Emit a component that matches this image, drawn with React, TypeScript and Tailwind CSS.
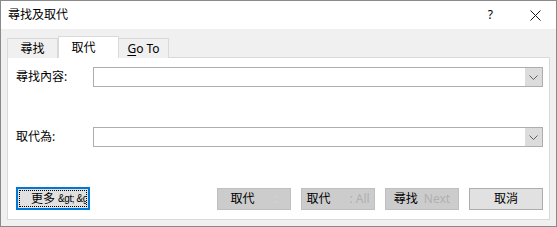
import React from 'react'

const font = "font-['Noto_Sans','Noto_Sans_CJK_TC',sans-serif]"

const Chevron = () => (
  <svg width="9" height="5" viewBox="0 0 9 5" className="text-[#606060]">
    <path d="M0.5 0.5 L4.5 4.5 L8.5 0.5" fill="none" stroke="currentColor" strokeWidth="1" />
  </svg>
)

const ComboBox = () => (
  <div className="flex h-[20px] w-[450px] border border-[#adadad] bg-white">
    <div className="flex-1" />
    <div className="flex w-[17px] items-center justify-center bg-[#dcdcdc]">
      <Chevron />
    </div>
  </div>
)

type DisabledButtonProps = {
  main: string
  extra: string
  extraClass?: string
}

const DisabledButton = ({ main, extra, extraClass }: DisabledButtonProps) => (
  <button
    disabled
    className="flex h-[22px] w-[74px] items-center justify-center border border-[#bfbfbf] bg-[#cccccc] text-[12px] leading-none whitespace-nowrap text-black"
  >
    <span>{main}</span>
    <span className={extraClass ?? 'ml-[6px] text-[#a8a8a8]'}>{extra}</span>
  </button>
)

export default function App() {
  return (
    <div
      className={`flex h-[227px] w-[557px] flex-col border border-[#8a8a8a] text-black ${font}`}
    >
      {/* title bar */}
      <div className="flex h-[28px] shrink-0 items-center bg-white pl-[7px]">
        <span className="text-[12px] leading-none">尋找及取代</span>
        <div className="flex-1" />
        <span className="mr-[37px] text-[12px] leading-none">?</span>
        <svg width="11" height="11" viewBox="0 0 11 11" className="mr-[15px]">
          <path d="M0.5 0.5 L10.5 10.5 M10.5 0.5 L0.5 10.5" stroke="#1a1a1a" strokeWidth="1" />
        </svg>
      </div>

      {/* body */}
      <div className="flex flex-1 flex-col bg-[#f0f0f0] pt-[7px] pr-[6px] pb-[6px] pl-[6px]">
        {/* tabs */}
        <div className="relative z-10 -mb-px flex h-[22px] items-end">
          <div className="flex h-[20px] w-[51px] items-center justify-center border border-b-0 border-[#d9d9d9] bg-[#f0f0f0] text-[12px] leading-none">
            尋找
          </div>
          <div className="flex h-[22px] w-[61px] items-start justify-center border border-b-0 border-[#d9d9d9] bg-white pt-[5px] pr-[10px] text-[12px] leading-none">
            取代
          </div>
          <div className="flex h-[20px] w-[50px] items-center justify-center border border-b-0 border-l-0 border-[#d9d9d9] bg-[#f0f0f0] text-[12px] leading-none">
            <span>
              <span className="underline underline-offset-2">G</span>o To
            </span>
          </div>
        </div>

        {/* panel */}
        <div className="flex flex-1 flex-col border border-[#d9d9d9] bg-white pl-[8px]">
          <div className="mt-[9px] flex items-center">
            <span className="w-[77px] text-[12px] leading-none">尋找內容:</span>
            <ComboBox />
          </div>
          <div className="mt-[40px] flex items-center">
            <span className="w-[77px] text-[12px] leading-none">取代為:</span>
            <ComboBox />
          </div>

          <div className="mt-[40px] flex items-center">
            <button className="flex h-[23px] w-[74px] items-center overflow-hidden border-2 border-[#0078d7] bg-[#e1e1e1] p-px">
              <div className="flex h-full w-full items-center overflow-hidden border border-dotted border-black pl-[11px] text-[12px] leading-none whitespace-nowrap">
                <span>更多</span>
                <span className="ml-[3px] font-['Liberation_Sans',sans-serif] text-[10px] tracking-[-0.4px]">
                  &amp;gt; &amp;gt
                </span>
              </div>
            </button>
            <div className="ml-[127px] flex gap-[10px]">
              <DisabledButton main="取代" extra=":" extraClass="ml-[20px] text-[#c8d8e8]" />
              <DisabledButton main="取代" extra=": All" extraClass="ml-[19px] text-[#b0b0b0]" />
              <DisabledButton main="尋找" extra="Next" extraClass="ml-[6px] text-[#b0b0b0]" />
              <button className="flex h-[22px] w-[74px] items-center justify-center border border-[#adadad] bg-[#e1e1e1] text-[12px] leading-none">
                取消
              </button>
            </div>
          </div>
        </div>
      </div>
    </div>
  )
}
